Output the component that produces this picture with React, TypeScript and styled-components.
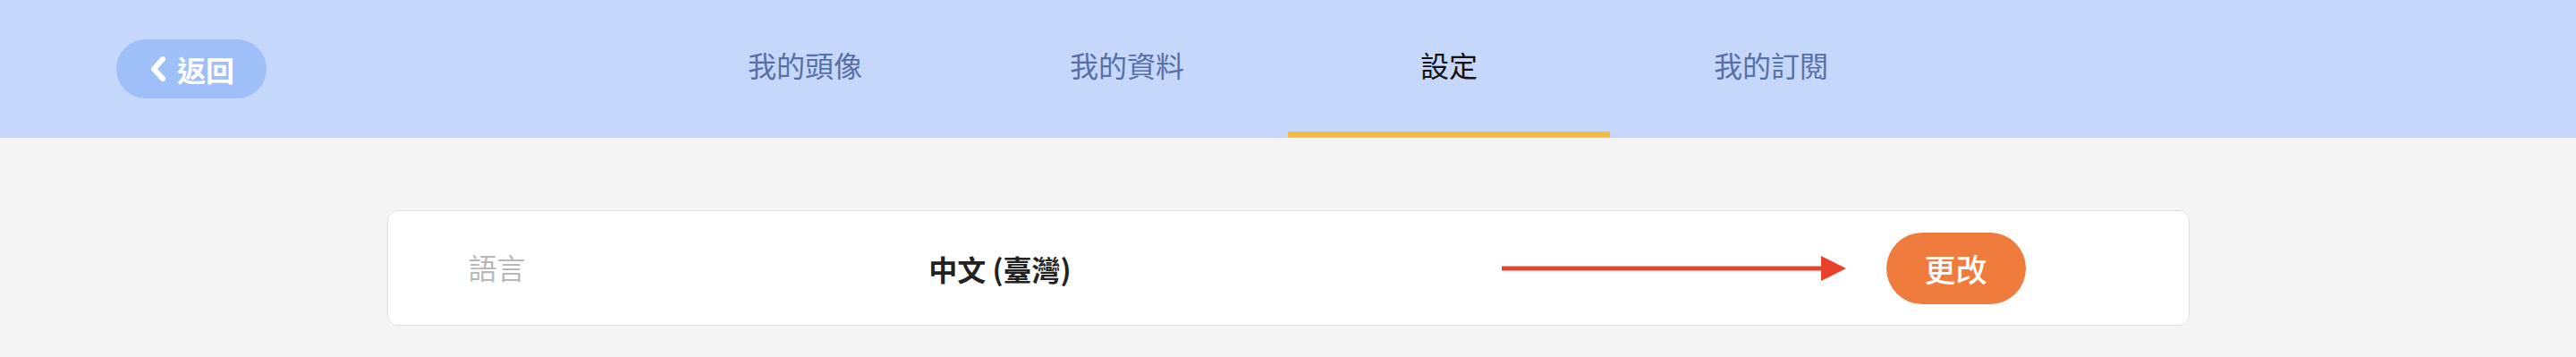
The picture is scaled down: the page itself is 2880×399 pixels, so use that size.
import React from "react";
import styled, { createGlobalStyle } from "styled-components";

const GlobalStyle = createGlobalStyle`
  html, body {
    margin: 0;
    padding: 0;
    background: #f4f4f4;
    font-family: "Noto Sans CJK TC", "Noto Sans", sans-serif;
  }
  * { box-sizing: border-box; }
`;

const Header = styled.header`
  display: grid;
  grid-template-columns: 1fr 1440px 1fr;
  height: 154px;
  background-color: #c5d7fb;
`;

const BackCell = styled.div`
  display: flex;
  align-items: center;
  padding-left: 130px;
`;

const BackButton = styled.button`
  display: flex;
  align-items: center;
  justify-content: center;
  gap: 12px;
  width: 168px;
  height: 66px;
  padding: 0 0 0 2px;
  border: none;
  border-radius: 33px;
  background-color: #9fbff9;
  color: #ffffff;
  font-family: inherit;
  font-size: 32px;
  font-weight: 700;
  cursor: pointer;

  svg {
    display: block;
  }
`;

const Tabs = styled.nav`
  display: grid;
  grid-template-columns: repeat(4, 360px);
`;

const Tab = styled.div<{ $active?: boolean }>`
  display: flex;
  align-items: center;
  justify-content: center;
  padding-bottom: 4px;
  font-size: 32px;
  color: ${(p) => (p.$active ? "#111111" : "#5670a8")};
  border-bottom: 7px solid ${(p) => (p.$active ? "#f5bd42" : "transparent")};
  cursor: pointer;
`;

const Main = styled.main`
  display: flex;
  justify-content: center;
  padding: 81px 0 35px;
`;

const Card = styled.section`
  display: flex;
  align-items: center;
  width: 2015px;
  height: 129px;
  padding: 0 182px 0 90px;
  background: #ffffff;
  border: 1px solid #e0e0e0;
  border-radius: 12px;
`;

const Label = styled.div`
  width: 515px;
  font-size: 32px;
  color: #b8b8b8;
  padding-bottom: 4px;
`;

const Value = styled.div`
  width: 641px;
  font-size: 32px;
  font-weight: 700;
  color: #222222;
`;

const ArrowWrap = styled.div`
  display: flex;
  align-items: center;
  width: 430px;
  svg { display: block; }
`;

const ChangeButton = styled.button`
  width: 156px;
  height: 80px;
  border: none;
  border-radius: 40px;
  background-color: #ef7b3c;
  color: #ffffff;
  font-family: inherit;
  font-size: 35px;
  font-weight: 500;
  cursor: pointer;
`;

const tabs = ["我的頭像", "我的資料", "設定", "我的訂閱"];

export default function App() {
  return (
    <>
      <GlobalStyle />
      <Header>
        <BackCell>
          <BackButton>
            <svg width="18" height="28" viewBox="0 0 18 28">
              <path
                d="M14 3 L4 14 L14 25"
                fill="none"
                stroke="#ffffff"
                strokeWidth="6"
                strokeLinecap="round"
                strokeLinejoin="round"
              />
            </svg>
            返回
          </BackButton>
        </BackCell>
        <Tabs>
          {tabs.map((t) => (
            <Tab key={t} $active={t === "設定"}>
              {t}
            </Tab>
          ))}
        </Tabs>
        <div />
      </Header>
      <Main>
        <Card>
          <Label>語言</Label>
          <Value>中文 (臺灣)</Value>
          <ArrowWrap>
            <svg width="385" height="28" viewBox="0 0 385 28">
              <rect x="0" y="11.5" width="360" height="5" fill="#e8432a" />
              <polygon points="357,0 385,14 357,28" fill="#e8432a" />
            </svg>
          </ArrowWrap>
          <ChangeButton>更改</ChangeButton>
        </Card>
      </Main>
    </>
  );
}
